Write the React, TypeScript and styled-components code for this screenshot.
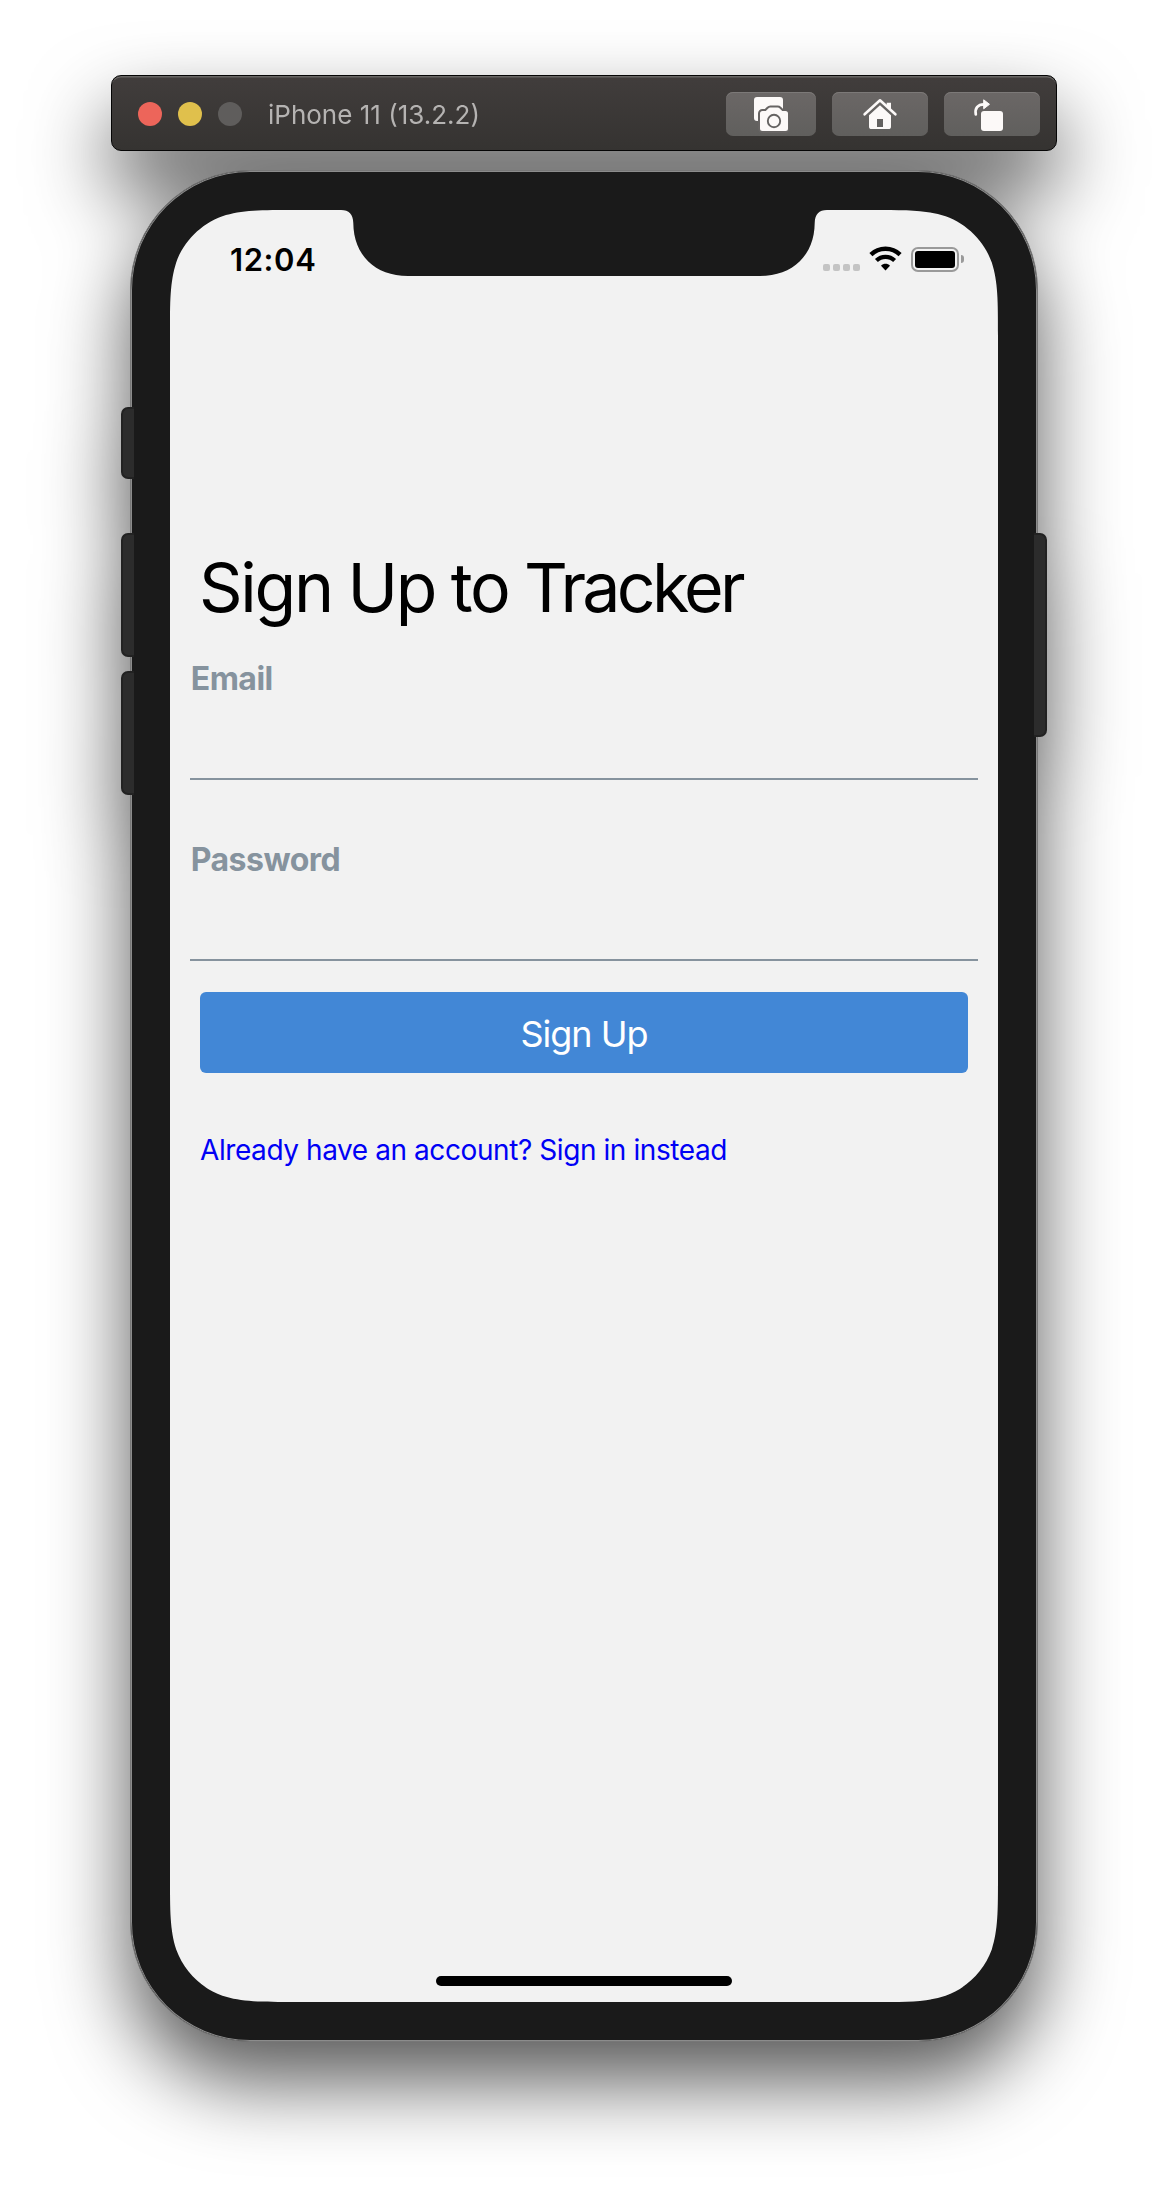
import React from "react";
import styled, { createGlobalStyle } from "styled-components";

const GlobalStyle = createGlobalStyle`
  *, *::before, *::after { box-sizing: border-box; }
  body {
    margin: 0;
    background: #ffffff;
    font-family: Inter, "Liberation Sans", sans-serif;
  }
`;

const Desktop = styled.main`
  width: 1168px;
  height: 2190px;
  padding-top: 75px;
  overflow: hidden;
`;

const Simulator = styled.div`
  display: flex;
  flex-direction: column;
  align-items: center;
  gap: 19px;
  filter: drop-shadow(0 40px 40px rgba(0, 0, 0, 0.65));
`;

const TitleBar = styled.header`
  width: 946px;
  height: 76px;
  display: flex;
  align-items: center;
  padding: 2px 16px 0 26px;
  border: 1px solid #050505;
  border-radius: 10px;
  background: linear-gradient(#413d3c, #353331);
  box-shadow: inset 0 2px 0 -0.5px #686664;
`;

const TrafficLights = styled.div`
  display: flex;
  gap: 16px;
`;

const Light = styled.span<{ $color: string }>`
  width: 24px;
  height: 24px;
  border-radius: 50%;
  background: ${(p) => p.$color};
`;

const WindowTitle = styled.span`
  flex: 1;
  margin-left: 26px;
  padding-top: 2px;
  font-size: 26px;
  line-height: 32px;
  letter-spacing: 0;
  color: #b5b3b2;
  white-space: nowrap;
`;

const Tools = styled.div`
  display: flex;
  gap: 16px;
`;

const ToolButton = styled.button<{ $width: number }>`
  width: ${(p) => p.$width}px;
  height: 44px;
  display: flex;
  justify-content: center;
  padding: 0;
  border: 0;
  border-radius: 7px;
  background: linear-gradient(#6b6766, #605f5d);
  box-shadow: inset 0 1px 0 #7c7978;

  svg { display: block; }
`;

const Phone = styled.div`
  position: relative;
  width: 908px;
  height: 1872px;
  padding: 39px;
  border: 1px solid #777777;
  border-radius: 120px;
  background: #1a1a1a;
  box-shadow: inset 0 0 0 1px #8c8c8c;
`;

const SideKey = styled.span<{ $side: "left" | "right"; $top: number; $height: number }>`
  position: absolute;
  z-index: 1;
  ${(p) => p.$side}: -10px;
  top: ${(p) => p.$top}px;
  width: 13px;
  height: ${(p) => p.$height}px;
  border: 2px solid #222222;
  border-${(p) => (p.$side === "left" ? "right" : "left")}: 0;
  border-radius: ${(p) => (p.$side === "left" ? "7px 0 0 7px" : "0 7px 7px 0")};
  background: #2c2c2c;
`;

const Screen = styled.section`
  width: 828px;
  height: 1792px;
  display: flex;
  flex-direction: column;
  background: #f2f2f2;
  clip-path: path(
    "M126.9 0 H171 C179 0 183 4 183.3 13 C183.5 45 205 66 238 66 H590 C623 66 644.5 45 644.7 13 C645 4 649 0 657 0 H701.1 C737.7 0 755.9 0 775.6 6.2 C797.1 14 814 30.9 821.8 52.4 C828 72.1 828 90.3 828 126.9 V1665.1 C828 1701.7 828 1719.9 821.8 1739.6 C814 1761.1 797.1 1778 775.6 1785.8 C755.9 1792 737.7 1792 701.1 1792 H126.9 C90.3 1792 72.1 1792 52.4 1785.8 C30.9 1778 14 1761.1 6.2 1739.6 C0 1719.9 0 1701.7 0 1665.1 V126.9 C0 90.3 0 72.1 6.2 52.4 C14 30.9 30.9 14 52.4 6.2 C72.1 0 90.3 0 126.9 0 Z"
  );
`;

const StatusBar = styled.div`
  height: 88px;
  display: flex;
  justify-content: space-between;
  align-items: flex-start;
  padding: 31px 34px 0 60px;
`;

const Clock = styled.time`
  font-size: 31px;
  line-height: 38px;
  font-weight: 600;
  letter-spacing: 0.6px;
`;

const StatusIcons = styled.div`
  display: flex;
  align-items: flex-end;
  height: 30px;
`;

const Signal = styled.div`
  display: flex;
  gap: 3px;
  margin-right: 9px;

  span {
    width: 7px;
    height: 7px;
    border-radius: 2px;
    background: #c4c4c4;
  }
`;

const Battery = styled.div`
  width: 48px;
  height: 25px;
  margin: 0 2px -1px 9px;
  padding: 2px;
  border: 2px solid #9a9a9a;
  border-radius: 7px;

  &::before {
    content: "";
    display: block;
    height: 17px;
    border-radius: 3px;
    background: #000000;
  }
`;

const BatteryTip = styled.span`
  width: 3px;
  height: 8px;
  margin-bottom: 8px;
  border-radius: 0 3px 3px 0;
  background: #9a9a9a;
`;

const Form = styled.form`
  flex: 1;
  display: flex;
  flex-direction: column;
  padding: 248px 20px 0;
`;

const Heading = styled.h1`
  margin: 0 10px 31px 9px;
  font-size: 68px;
  line-height: 82px;
  font-weight: 400;
  letter-spacing: -2.3px;
  word-spacing: -1.2px;
  color: #000000;
  white-space: nowrap;
`;

const AppName = styled.span`
  letter-spacing: -3.7px;
`;

const Field = styled.label`
  display: flex;
  flex-direction: column;

  & + & { margin-top: 60px; }
`;

const FieldLabel = styled.span`
  padding-left: 0.7px;
  font-size: 32px;
  line-height: 39px;
  font-weight: 700;
  letter-spacing: -0.5px;
  color: #86939e;
`;

const Input = styled.input`
  width: 100%;
  height: 82px;
  padding: 0;
  border: 0;
  border-bottom: 2px solid #86939e;
  border-radius: 0;
  background: transparent;
  font: inherit;
  font-size: 36px;
  outline: none;
`;

const SubmitButton = styled.button`
  height: 81px;
  margin: 31px 10px 60px;
  padding: 2px 0 0;
  border: 0;
  border-radius: 6px;
  background: #4287d6;
  color: #ffffff;
  font-family: inherit;
  font-size: 36px;
  line-height: 44px;
  letter-spacing: -1px;
`;

const SwitchLink = styled.a`
  align-self: flex-start;
  margin-left: 10px;
  font-size: 28px;
  line-height: 34px;
  letter-spacing: -0.42px;
  color: #0000f5;
  text-decoration: none;
  white-space: nowrap;
`;

const HomeIndicator = styled.div`
  align-self: center;
  width: 296px;
  height: 10px;
  margin-bottom: 16px;
  border-radius: 5px;
  background: #000000;
`;

const CAMERA_BODY =
  "M9.500 19h3.300l2.500-2.600c.6-.6 1.200-.9 2-.9h7.400c.8 0 1.400.3 2 .9l2.500 2.600h3.300a2.500 2.500 0 0 1 2.500 2.500v15a2.500 2.500 0 0 1-2.500 2.500h-23A2.500 2.500 0 0 1 7 36.500v-15A2.500 2.500 0 0 1 9.500 19z";

const CameraIcon = () => (
  <svg width="36" height="44" viewBox="0 0 36 44">
    <path d="M4 5h23a3 3 0 0 1 3 3v11H6v10H4a3 3 0 0 1-3-3V8a3 3 0 0 1 3-3z" fill="#fcf9f8" />
    <path d={CAMERA_BODY} fill="#676463" stroke="#676463" strokeWidth="4" />
    <path d={CAMERA_BODY} fill="#fcf9f8" />
    <circle cx="21" cy="29" r="6.200" fill="none" stroke="#656362" strokeWidth="1.900" />
  </svg>
);

const HomeIcon = () => (
  <svg width="36" height="44" viewBox="0 0 36 44">
    <path d="M24.700 10.700h4.300v8.300l-4.300-4z" fill="#fcf9f8" />
    <path d="M2.600 22.300 18 8.300l15.400 14" fill="none" stroke="#fcf9f8" strokeWidth="2.600" strokeLinecap="round" strokeLinejoin="round" />
    <path
      fillRule="evenodd"
      d="M18 13.200 29 23.200V34.400a2.600 2.600 0 0 1-2.600 2.600H9.600A2.600 2.600 0 0 1 7 34.400V23.200zM15 27v8h6v-8z"
      fill="#fcf9f8"
    />
  </svg>
);

const RotateIcon = () => (
  <svg width="36" height="44" viewBox="0 0 36 44">
    <path d="M3.800 22.500C2.600 16.500 5.600 12.300 12 12.300" fill="none" stroke="#fcf9f8" strokeWidth="2.700" strokeLinecap="round" />
    <path d="M11.700 7.800v9l5.800-4.500z" fill="#fcf9f8" stroke="#fcf9f8" strokeWidth="1" strokeLinejoin="round" />
    <rect x="9" y="19" width="22" height="20" rx="3" fill="#fcf9f8" />
  </svg>
);

const RotateSlot = styled.span`
  margin-right: 4px;
`;

const WifiIcon = () => (
  <svg width="33" height="25" viewBox="0 0 33 25">
    <path d="M1.900 8.600C10 .7 23 .7 31.100 8.600" fill="none" stroke="#000000" strokeWidth="4.400" />
    <path d="M7.400 14.500c5-4.900 13.200-4.900 18.200 0" fill="none" stroke="#000000" strokeWidth="4.200" />
    <path d="M12 19.700c2.500-2.500 6.500-2.500 9 0l-4.500 4.700z" fill="#000000" />
  </svg>
);

export default function App() {
  return (
    <>
      <GlobalStyle />
      <Desktop>
        <Simulator>
          <TitleBar>
            <TrafficLights>
              <Light $color="#ed655a" />
              <Light $color="#e0c04c" />
              <Light $color="#5f5d5c" />
            </TrafficLights>
            <WindowTitle>iPhone 11 (13.2.2)</WindowTitle>
            <Tools>
              <ToolButton $width={90} aria-label="Screenshot">
                <CameraIcon />
              </ToolButton>
              <ToolButton $width={96} aria-label="Home">
                <HomeIcon />
              </ToolButton>
              <ToolButton $width={96} aria-label="Rotate">
                <RotateSlot>
                  <RotateIcon />
                </RotateSlot>
              </ToolButton>
            </Tools>
          </TitleBar>

          <Phone>
            <SideKey $side="left" $top={236} $height={72} />
            <SideKey $side="left" $top={362} $height={124} />
            <SideKey $side="left" $top={500} $height={124} />
            <SideKey $side="right" $top={362} $height={204} />
            <Screen>
              <StatusBar>
                <Clock>12:04</Clock>
                <StatusIcons>
                  <Signal>
                    <span />
                    <span />
                    <span />
                    <span />
                  </Signal>
                  <WifiIcon />
                  <Battery />
                  <BatteryTip />
                </StatusIcons>
              </StatusBar>
              <Form>
                <Heading>
                  Sign Up to <AppName>Tracker</AppName>
                </Heading>
                <Field>
                  <FieldLabel>Email</FieldLabel>
                  <Input type="email" />
                </Field>
                <Field>
                  <FieldLabel>Password</FieldLabel>
                  <Input type="password" />
                </Field>
                <SubmitButton type="button">Sign Up</SubmitButton>
                <SwitchLink>Already have an account? Sign in instead</SwitchLink>
              </Form>
              <HomeIndicator />
            </Screen>
          </Phone>
        </Simulator>
      </Desktop>
    </>
  );
}
